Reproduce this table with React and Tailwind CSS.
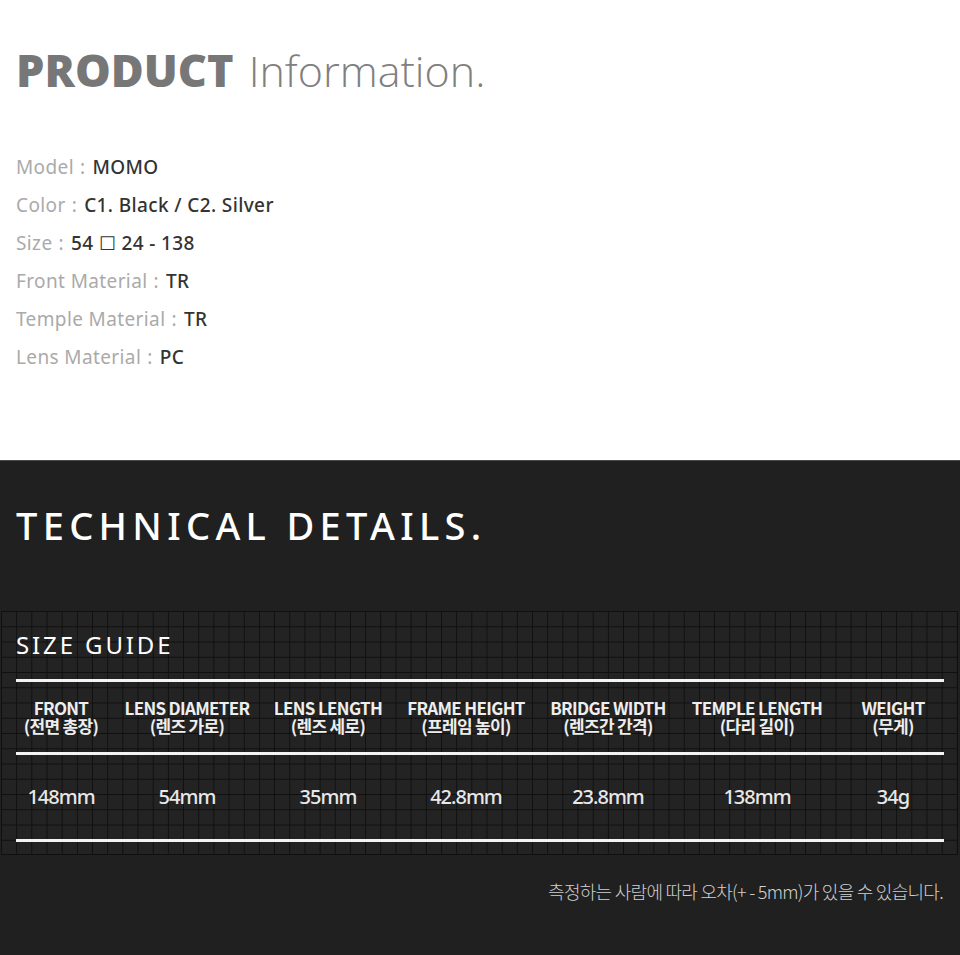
const info = [
  ["Model", "MOMO"],
  ["Color", "C1. Black / C2. Silver"],
  ["Size", "54 ☐ 24 - 138"],
  ["Front Material", "TR"],
  ["Temple Material", "TR"],
  ["Lens Material", "PC"],
];

const cols = [
  { en: "FRONT", ko: "(전면 총장)", val: "148mm" },
  { en: "LENS DIAMETER", ko: "(렌즈 가로)", val: "54mm" },
  { en: "LENS LENGTH", ko: "(렌즈 세로)", val: "35mm" },
  { en: "FRAME HEIGHT", ko: "(프레임 높이)", val: "42.8mm" },
  { en: "BRIDGE WIDTH", ko: "(렌즈간 간격)", val: "23.8mm" },
  { en: "TEMPLE LENGTH", ko: "(다리 길이)", val: "138mm" },
  { en: "WEIGHT", ko: "(무게)", val: "34g" },
];

const gridCols = "grid grid-cols-[90px_162px_120px_156px_128px_170px_102px]";

export default function App() {
  return (
    <div className="w-[960px] h-[955px] overflow-hidden bg-white font-['Noto_Sans','Noto_Sans_CJK_KR',sans-serif]">
      {/* Product info */}
      <section className="h-[460px] px-4 pt-[47px]">
        <h1 className="flex items-baseline leading-none font-['Open_Sans',sans-serif] text-[#777] whitespace-nowrap">
          <span className="text-[45px] font-extrabold">PRODUCT</span>
          <span className="ml-[15px] text-[43px] font-light text-[#808080]">Information.</span>
        </h1>
        <ul className="mt-[56px] text-[19px] leading-[38px] tracking-[0.02em]">
          {info.map(([k, v]) => (
            <li key={k}>
              <span className="text-[#aaa]">{k}</span>
              <span className="text-[#aaa] ml-[6px] mr-[7px]">:</span>
              <span className="text-[#333] font-medium">{v}</span>
            </li>
          ))}
        </ul>
      </section>

      {/* Technical details */}
      <section className="h-[495px] bg-[#202020] border-t border-[#4a4a4a] pt-[45px]">
        <h2 className="px-4 text-[38px] leading-none font-medium tracking-[0.14em] text-white">
          TECHNICAL DETAILS.
        </h2>

        <div className="mt-[67px] ml-px w-[957px] h-[244px] bg-[#232323] bg-[linear-gradient(to_right,#101010_1px,transparent_1px),linear-gradient(to_bottom,#101010_1px,transparent_1px)] bg-[size:15.18px_15.25px] border-r border-b border-[#101010] pt-[22px] px-[15px]">
          <h3 className="text-[24px] leading-none tracking-[0.12em] text-white">SIZE GUIDE</h3>
          <div className="mt-[22px] w-[928px] border-t-[3px] border-[#f4f4f4]">
            <div className={`${gridCols} h-[73px] items-center border-b-[3px] border-[#f4f4f4] font-['Noto_Sans_CJK_KR',sans-serif] text-[17px] leading-[18px] font-bold tracking-[-0.04em] text-[#eee] text-center`}>
              {cols.map((c) => (
                <div key={c.en} className="whitespace-nowrap">
                  <div>{c.en}</div>
                  <div>{c.ko}</div>
                </div>
              ))}
            </div>
            <div className={`${gridCols} h-[87px] items-center border-b-[3px] border-[#f4f4f4] text-[20px] font-medium tracking-[-0.05em] text-[#e8e8e8] text-center`}>
              {cols.map((c) => (
                <div key={c.en}>{c.val}</div>
              ))}
            </div>
          </div>
        </div>

        <p className="mt-[23px] pr-[17px] text-right text-[18px] font-['Noto_Sans_CJK_KR',sans-serif] font-light tracking-[-0.04em] text-[#d0d0d0]">
          측정하는 사람에 따라 오차(+ - 5mm)가 있을 수 있습니다.
        </p>
      </section>
    </div>
  );
}
